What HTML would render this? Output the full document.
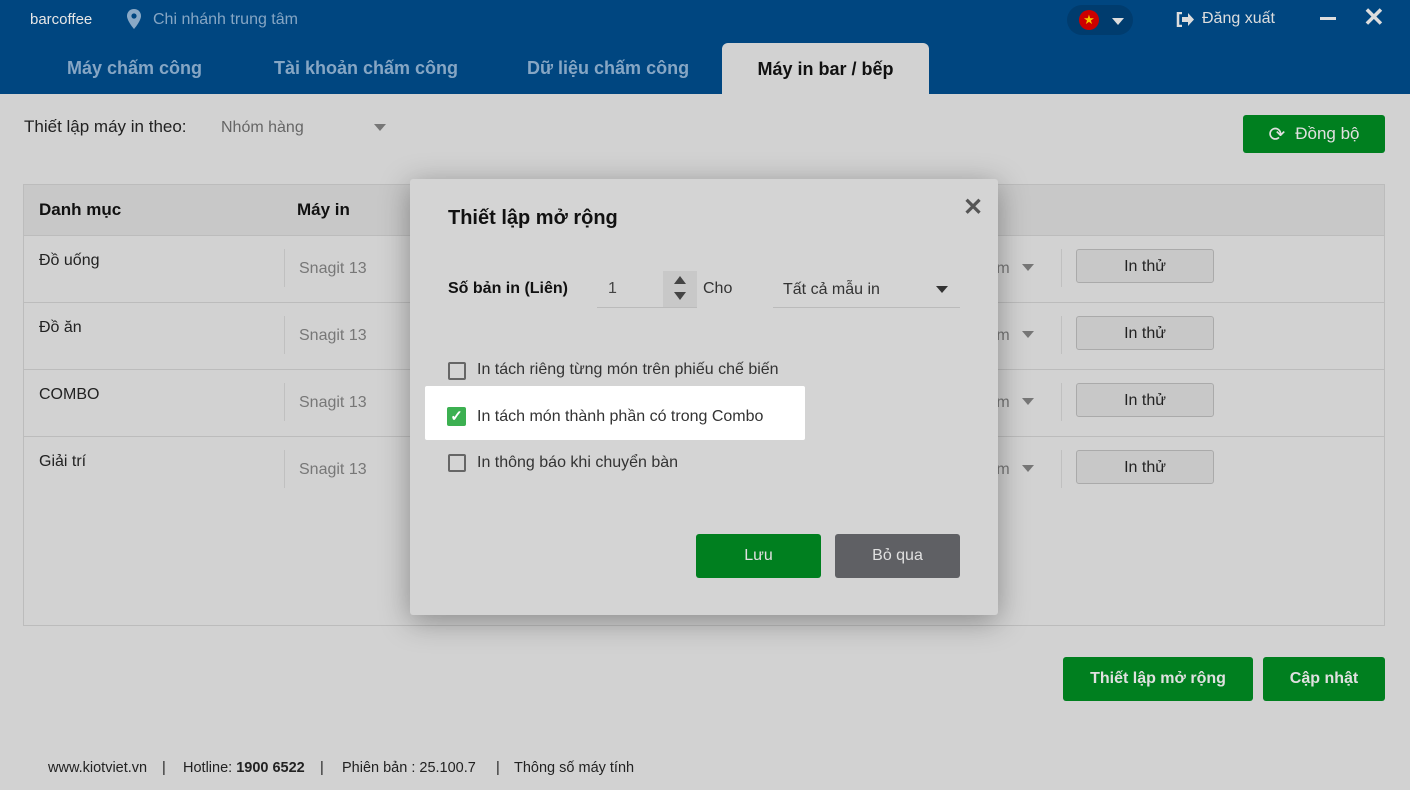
<!DOCTYPE html>
<html><head><meta charset="utf-8"><style>
*{box-sizing:border-box;margin:0;padding:0}
body{width:1410px;height:790px;background:#d2d2d2;font-family:"Liberation Sans",sans-serif;position:relative;overflow:hidden;color:#111}
.hdr{position:absolute;left:0;top:0;width:1410px;height:94px;background:#004680}
.abs{position:absolute;white-space:nowrap}
.tab{position:absolute;top:58px;font-size:18px;font-weight:bold;color:#86a6c4}
.btn{position:absolute;border-radius:3px;color:#e0e0e0;font-size:16px;font-weight:bold;display:flex;align-items:center;justify-content:center}
.row{position:absolute;left:24px;width:1361px;border-top:1px solid #bcbcbc}
.cat{position:absolute;left:15px;top:16px;font-size:16px;color:#222}
.sn{position:absolute;left:275px;top:24px;font-size:16px;color:#777}
.mm{position:absolute;left:903px;top:24px;font-size:16px;color:#777;white-space:nowrap}
.vl{position:absolute;top:13px;width:1px;height:38px;background:#c0c0c0}
.inthu{position:absolute;left:1052px;top:13px;width:138px;height:34px;border:1px solid #aaa;border-radius:3px;background:#c8c8c8;font-size:16px;color:#222;text-align:center;line-height:34px}
.tri{position:absolute;width:0;height:0;border-left:6px solid transparent;border-right:6px solid transparent;border-top:7px solid #777}
.cb{position:absolute;left:448px;width:18px;height:18px;border:2px solid #666;border-radius:2px}
.cbl{position:absolute;left:477px;font-size:16px;color:#333}
.ft{position:absolute;top:760px;font-size:14.5px;color:#222;white-space:nowrap}
</style></head><body>
<div class="hdr"></div>
<div class="abs" style="left:30px;top:11px;font-size:15px;color:#e6e6e6">barcoffee</div>
<svg class="abs" style="left:127px;top:9px" width="14" height="20" viewBox="0 0 14 20"><path d="M7 0C3 0 0 3 0 7c0 5 7 13 7 13s7-8 7-13C14 3 11 0 7 0z" fill="#8aa9c6"/><circle cx="7" cy="7" r="2.6" fill="#004680"/></svg>
<div class="abs" style="left:153px;top:11px;font-size:16px;color:#86a6c4">Chi nhánh trung tâm</div>
<div class="abs" style="left:1067px;top:5px;width:66px;height:30px;border-radius:15px;background:#003c6e"></div>
<div class="abs" style="left:1079px;top:10px;width:20px;height:20px;border-radius:50%;background:#c00;color:#f5c400;font-size:13px;text-align:center;line-height:20px">★</div>
<div class="tri" style="left:1112px;top:18px;border-top-color:#ddd"></div>
<svg class="abs" style="left:1176px;top:12px" width="18" height="15" viewBox="0 0 18 15"><path d="M6 1H2v13h4" stroke="#ddd" stroke-width="2.5" fill="none"/><path d="M6 5h6V1l6 6.5-6 6.5V10H6z" fill="#ddd"/></svg>
<div class="abs" style="left:1202px;top:10px;font-size:16px;color:#ddd">Đăng xuất</div>
<div class="abs" style="left:1320px;top:17px;width:16px;height:3px;background:#ddd"></div>
<div class="abs" style="left:1363px;top:2px;font-size:26px;color:#ddd;font-weight:bold">✕</div>
<div class="tab" style="left:67px">Máy chấm công</div>
<div class="tab" style="left:274px">Tài khoản chấm công</div>
<div class="tab" style="left:527px">Dữ liệu chấm công</div>
<div class="abs" style="left:722px;top:43px;width:207px;height:51px;background:#d2d2d2;border-radius:6px 6px 0 0;font-size:18px;font-weight:bold;text-align:center;line-height:52px;color:#111">Máy in bar / bếp</div>

<div class="abs" style="left:24px;top:117px;font-size:17px;color:#222">Thiết lập máy in theo:</div>
<div class="abs" style="left:221px;top:119px;font-size:16px;color:#666">Nhóm hàng</div>
<div class="tri" style="left:374px;top:124px"></div>
<div class="btn" style="left:1243px;top:115px;width:142px;height:38px;background:#007f1f;font-weight:normal;font-size:17px"><span style="font-size:20px;margin-right:10px">⟳</span>Đồng bộ</div>

<div class="abs" style="left:23px;top:184px;width:1362px;height:442px;border:1px solid #bcbcbc;background:#d2d2d2"></div>
<div class="abs" style="left:24px;top:185px;width:1360px;height:50px;background:#c8c8c8"></div>
<div class="abs" style="left:39px;top:200px;font-size:17px;font-weight:bold">Danh mục</div>
<div class="abs" style="left:297px;top:200px;font-size:17px;font-weight:bold">Máy in</div>
<div class="row" style="top:235px;height:67px"><div class="cat">Đồ uống</div><div class="vl" style="left:260px"></div><div class="sn">Snagit 13</div><div class="mm">Mặc định m</div><div class="tri" style="left:998px;top:28px"></div><div class="vl" style="left:1037px"></div><div class="inthu">In thử</div></div>
<div class="row" style="top:302px;height:67px"><div class="cat">Đồ ăn</div><div class="vl" style="left:260px"></div><div class="sn">Snagit 13</div><div class="mm">Mặc định m</div><div class="tri" style="left:998px;top:28px"></div><div class="vl" style="left:1037px"></div><div class="inthu">In thử</div></div>
<div class="row" style="top:369px;height:67px"><div class="cat">COMBO</div><div class="vl" style="left:260px"></div><div class="sn">Snagit 13</div><div class="mm">Mặc định m</div><div class="tri" style="left:998px;top:28px"></div><div class="vl" style="left:1037px"></div><div class="inthu">In thử</div></div>
<div class="row" style="top:436px;height:67px"><div class="cat">Giải trí</div><div class="vl" style="left:260px"></div><div class="sn">Snagit 13</div><div class="mm">Mặc định m</div><div class="tri" style="left:998px;top:28px"></div><div class="vl" style="left:1037px"></div><div class="inthu">In thử</div></div>

<div class="btn" style="left:1063px;top:657px;width:190px;height:44px;background:#007f1f">Thiết lập mở rộng</div>
<div class="btn" style="left:1263px;top:657px;width:122px;height:44px;background:#007f1f">Cập nhật</div>

<div class="ft" style="left:48px">www.kiotviet.vn</div>
<div class="ft" style="left:162px">|</div>
<div class="ft" style="left:183px">Hotline: <b>1900 6522</b></div>
<div class="ft" style="left:320px">|</div>
<div class="ft" style="left:342px">Phiên bản : 25.100.7</div>
<div class="ft" style="left:496px">|</div>
<div class="ft" style="left:514px">Thông số máy tính</div>

<div class="abs" style="left:410px;top:179px;width:588px;height:436px;background:#d4d4d4;border-radius:3px;box-shadow:0 6px 30px rgba(0,0,0,.35)"></div>
<div class="abs" style="left:448px;top:207px;font-size:20px;font-weight:bold">Thiết lập mở rộng</div>
<div class="abs" style="left:963px;top:193px;font-size:24px;color:#555;font-weight:bold">✕</div>
<div class="abs" style="left:448px;top:280px;font-size:16px;font-weight:bold">Số bản in (Liên)</div>
<div class="abs" style="left:597px;top:307px;width:100px;height:1px;background:#bbb"></div>
<div class="abs" style="left:608px;top:280px;font-size:16px;color:#444">1</div>
<div class="abs" style="left:663px;top:271px;width:34px;height:36px;background:#c8c8c8"></div>
<div class="abs" style="left:674px;top:276px;border-left:6px solid transparent;border-right:6px solid transparent;border-bottom:8px solid #444;width:0"></div>
<div class="tri" style="left:674px;top:292px;border-top:8px solid #444"></div>
<div class="abs" style="left:703px;top:280px;font-size:16px;color:#333">Cho</div>
<div class="abs" style="left:773px;top:307px;width:187px;height:1px;background:#bbb"></div>
<div class="abs" style="left:783px;top:281px;font-size:16px;color:#333">Tất cả mẫu in</div>
<div class="tri" style="left:936px;top:286px;border-top-color:#333"></div>
<div class="cb" style="top:362px"></div>
<div class="cbl" style="top:361px">In tách riêng từng món trên phiếu chế biến</div>
<div class="abs" style="left:425px;top:386px;width:380px;height:54px;background:#fff;border-radius:2px"></div>
<div class="abs" style="left:447px;top:407px;width:19px;height:19px;background:#3cb051;border-radius:2px;color:#fff;font-size:15px;text-align:center;line-height:19px;font-weight:bold">✓</div>
<div class="cbl" style="top:408px">In tách món thành phần có trong Combo</div>
<div class="cb" style="top:454px"></div>
<div class="cbl" style="top:454px">In thông báo khi chuyển bàn</div>
<div class="btn" style="left:696px;top:534px;width:125px;height:44px;background:#007f1f;font-weight:normal">Lưu</div>
<div class="btn" style="left:835px;top:534px;width:125px;height:44px;background:#5f6064;font-weight:normal">Bỏ qua</div>
</body></html>
